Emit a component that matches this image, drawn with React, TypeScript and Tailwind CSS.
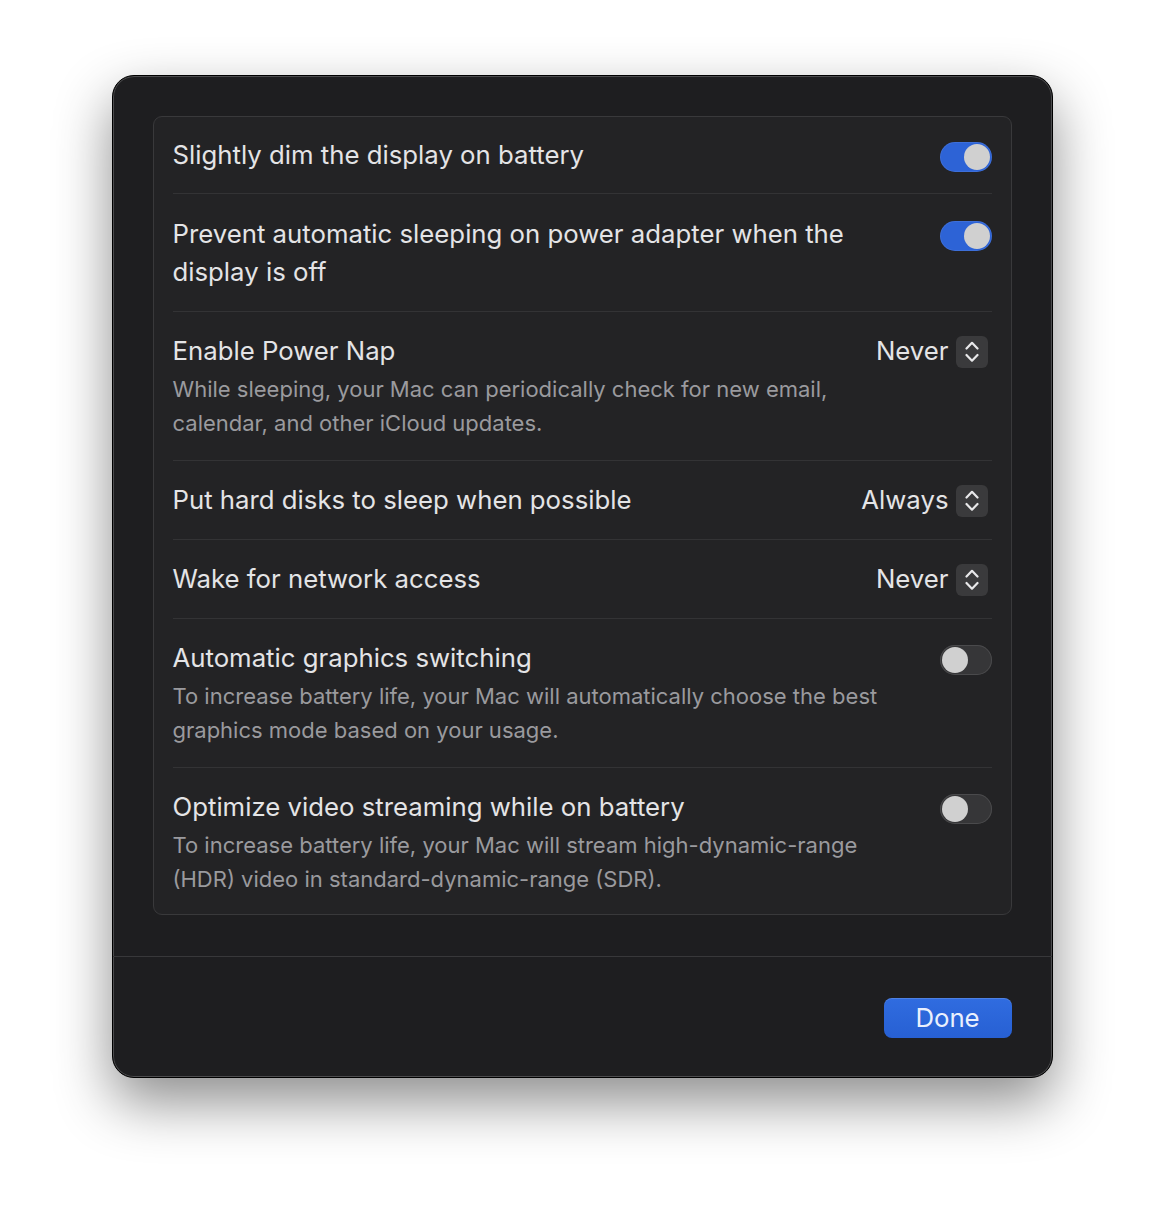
import React from 'react'

type Row = {
  title: string
  subtitle?: string
  control: { kind: 'toggle'; on: boolean } | { kind: 'popup'; value: string }
}

const rows: Row[] = [
  { title: 'Slightly dim the display on battery', control: { kind: 'toggle', on: true } },
  {
    title: 'Prevent automatic sleeping on power adapter when the display is off',
    control: { kind: 'toggle', on: true },
  },
  {
    title: 'Enable Power Nap',
    subtitle: 'While sleeping, your Mac can periodically check for new email, calendar, and other iCloud updates.',
    control: { kind: 'popup', value: 'Never' },
  },
  { title: 'Put hard disks to sleep when possible', control: { kind: 'popup', value: 'Always' } },
  { title: 'Wake for network access', control: { kind: 'popup', value: 'Never' } },
  {
    title: 'Automatic graphics switching',
    subtitle: 'To increase battery life, your Mac will automatically choose the best graphics mode based on your usage.',
    control: { kind: 'toggle', on: false },
  },
  {
    title: 'Optimize video streaming while on battery',
    subtitle: 'To increase battery life, your Mac will stream high-dynamic-range (HDR) video in standard-dynamic-range (SDR).',
    control: { kind: 'toggle', on: false },
  },
]

// row paddings, tuned per row to match the sheet
const rowPad = [
  'pt-[19px] pb-[19px]',
  'pt-[21px] pb-[20px]',
  'pt-[20px] pb-[20px]',
  'pt-[20px] pb-[20px]',
  'pt-[20px] pb-[20px]',
  'pt-[20px] pb-[20px]',
  'pt-[20px] pb-[18px]',
]

function Toggle({ on }: { on: boolean }) {
  if (on) {
    return (
      <div className="mt-[6px] flex h-[30px] w-[52px] shrink-0 items-center justify-end rounded-full bg-[#2d63d6] px-[2px] shadow-[inset_0_0_0_1px_rgba(255,255,255,0.08)]">
        <div className="h-[26px] w-[26px] rounded-full bg-[#d0d0d0]" />
      </div>
    )
  }
  return (
    <div className="mt-[6px] flex h-[30px] w-[52px] shrink-0 items-center rounded-full bg-[#363638] px-[2px] shadow-[inset_0_0_0_1px_#4a4a4c]">
      <div className="h-[26px] w-[26px] rounded-full bg-[#d0d0d0]" />
    </div>
  )
}

function Popup({ value }: { value: string }) {
  return (
    <div className="flex h-[38px] shrink-0 items-center gap-[7px] pr-[4px]">
      <span className="text-[25.75px] leading-[38px] text-[#e4e4e6]">{value}</span>
      <div className="mt-[1px] flex h-[32px] w-[32px] items-center justify-center rounded-[6px] bg-[#3a3a3c]">
        <svg width="14" height="22" viewBox="0 0 14 22" fill="none" stroke="#e8e8ea" strokeWidth="2.2" strokeLinecap="round" strokeLinejoin="round">
          <path d="M1.5 7.5 L7 1.8 L12.5 7.5" />
          <path d="M1.5 14 L7 19.7 L12.5 14" />
        </svg>
      </div>
    </div>
  )
}

export default function App() {
  return (
    <div className="min-h-[1226px] bg-white pt-[75px]" style={{ fontFamily: 'Inter, "Noto Sans", sans-serif' }}>
      <div className="mx-auto w-[941px] rounded-[22px] border border-black bg-[#1e1e20] shadow-[inset_0_0_0_1px_#4c4c4e,0_24px_56px_rgba(0,0,0,0.45)]">
        <div className="px-[40px] pt-[40px] pb-[41px]">
          <div className="rounded-[9px] border border-[#39393b] bg-[#232325] px-[19px]">
            {rows.map((row, i) => (
              <div
                key={row.title}
                className={`flex items-start justify-between gap-[40px] ${rowPad[i]} ${i < rows.length - 1 ? 'border-b border-[#333335]' : ''}`}
              >
                <div className="max-w-[726px]">
                  <div className="text-[25.75px] leading-[38px] text-[#e4e4e6]">{row.title}</div>
                  {row.subtitle && (
                    <div className="mt-[2px] text-[22px] leading-[34px] text-[#9a9a9e]">{row.subtitle}</div>
                  )}
                </div>
                {row.control.kind === 'toggle' ? <Toggle on={row.control.on} /> : <Popup value={row.control.value} />}
              </div>
            ))}
          </div>
        </div>
        <div className="flex justify-end border-t border-[#38383a] px-[40px] pt-[41px] pb-[39px]">
          <button className="h-[40px] w-[128px] rounded-[8px] bg-gradient-to-b from-[#306ce0] to-[#2760d3] text-[25.75px] leading-[40px] text-[#eaf0fd] shadow-[inset_0_1px_0_rgba(255,255,255,0.15)]">
            Done
          </button>
        </div>
      </div>
    </div>
  )
}
